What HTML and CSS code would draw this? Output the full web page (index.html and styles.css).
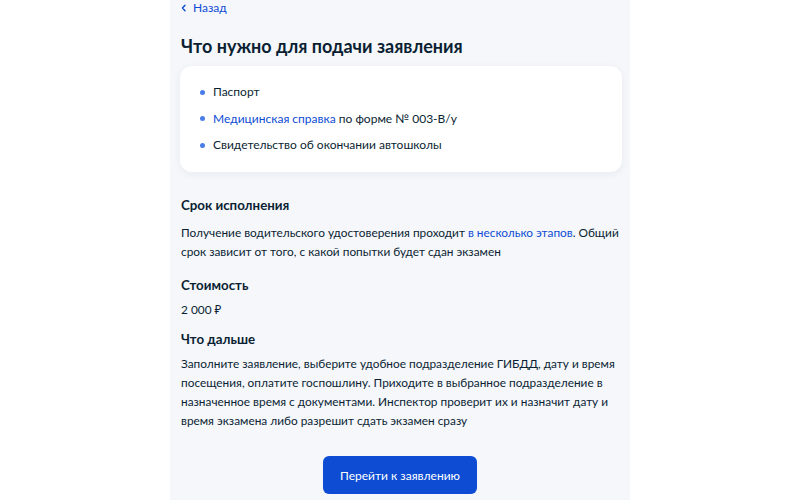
FILE: index.html
```html
<!DOCTYPE html>
<html lang="ru">
<head>
<meta charset="utf-8">
<link rel="stylesheet" href="styles.css">
</head>
<body>
<main class="page">
  <a class="back" href="#">
    <svg class="back-icon" width="6" height="8" viewBox="0 0 6 8"><path d="M4 1.2 L1.5 4 L4 6.8" fill="none" stroke="#0d4cd3" stroke-width="1.4" stroke-linecap="round" stroke-linejoin="round"/></svg>
    <span>Назад</span>
  </a>
  <h1 class="title">Что нужно для подачи заявления</h1>
  <section class="card">
    <ul class="docs">
      <li>Паспорт</li>
      <li><a href="#" class="link">Медицинская справка</a> по форме № 003-В/у</li>
      <li>Свидетельство об окончании автошколы</li>
    </ul>
  </section>
  <h2 class="h2 h2-first">Срок исполнения</h2>
  <p class="text text-first">Получение водительского удостоверения проходит <a href="#" class="link">в несколько этапов</a>. Общий срок зависит от того, с какой попытки будет сдан экзамен</p>
  <h2 class="h2 h2-cost">Стоимость</h2>
  <p class="text text-tight">2 000 ₽</p>
  <h2 class="h2 h2-next">Что дальше</h2>
  <p class="text text-tight">Заполните заявление, выберите удобное подразделение ГИБДД, дату и время посещения, оплатите госпошлину. Приходите в выбранное подразделение в назначенное время с документами. Инспектор проверит их и назначит дату и время экзамена либо разрешит сдать экзамен сразу</p>
  <div class="actions">
    <button class="btn" type="button">Перейти к заявлению</button>
  </div>
</main>
</body>
</html>
```
FILE: styles.css
```css
* { box-sizing: border-box; }
html, body { margin: 0; padding: 0; }
body {
  background: #ffffff;
  font-family: Lato, "Noto Sans", "Liberation Sans", sans-serif;
  color: #0b1f33;
  overflow: hidden;
}
.page {
  width: 460px;
  margin: 0 auto;
  min-height: 500px;
  background: #f5f7fb;
  padding: 0 8px 20px 10px;
}
.back {
  display: flex;
  align-items: center;
  gap: 6px;
  height: 16px;
  color: #0d4cd3;
  text-decoration: none;
  font-size: 12px;
  line-height: 16px;
  padding-left: 1px;
}
.title {
  margin: 18px 0 0;
  font-size: 18px;
  line-height: 24px;
  font-weight: 700;
  padding-left: 1px;
}
.card {
  margin-top: 8px;
  background: #ffffff;
  border-radius: 12px;
  box-shadow: 0 2px 8px rgba(11, 31, 51, 0.06);
  padding: 16px 20px 17px;
}
.docs {
  list-style: none;
  margin: 0;
  padding: 0;
  display: flex;
  flex-direction: column;
  gap: 6.5px;
}
.docs li {
  position: relative;
  padding-left: 13px;
  font-size: 12px;
  line-height: 20px;
}
.docs li::before {
  content: "";
  position: absolute;
  left: 0;
  top: 7.5px;
  width: 5px;
  height: 5px;
  border-radius: 50%;
  background: #4a7de8;
}
.link { color: #0d4cd3; text-decoration: none; }
.h2 {
  margin: 0;
  font-size: 13.3px;
  line-height: 20px;
  font-weight: 700;
  padding-left: 1px;
}
.h2-first { margin-top: 23px; }
.h2-cost { margin-top: 14.5px; }
.h2-next { margin-top: 10.5px; }
.text {
  margin: 0;
  font-size: 11.85px;
  line-height: 19px;
  padding-left: 1px;
}
.text-first { margin-top: 7.5px; }
.text-tight { margin-top: 4.5px; }
.actions {
  display: flex;
  justify-content: center;
  margin-top: 26.5px;
  padding-right: 2px;
}
.btn {
  width: 154px;
  height: 38px;
  border: none;
  border-radius: 6px;
  background: #0d4cd3;
  color: #ffffff;
  font-family: Lato, "Noto Sans", "Liberation Sans", sans-serif;
  font-size: 12px;
  cursor: pointer;
}
```
